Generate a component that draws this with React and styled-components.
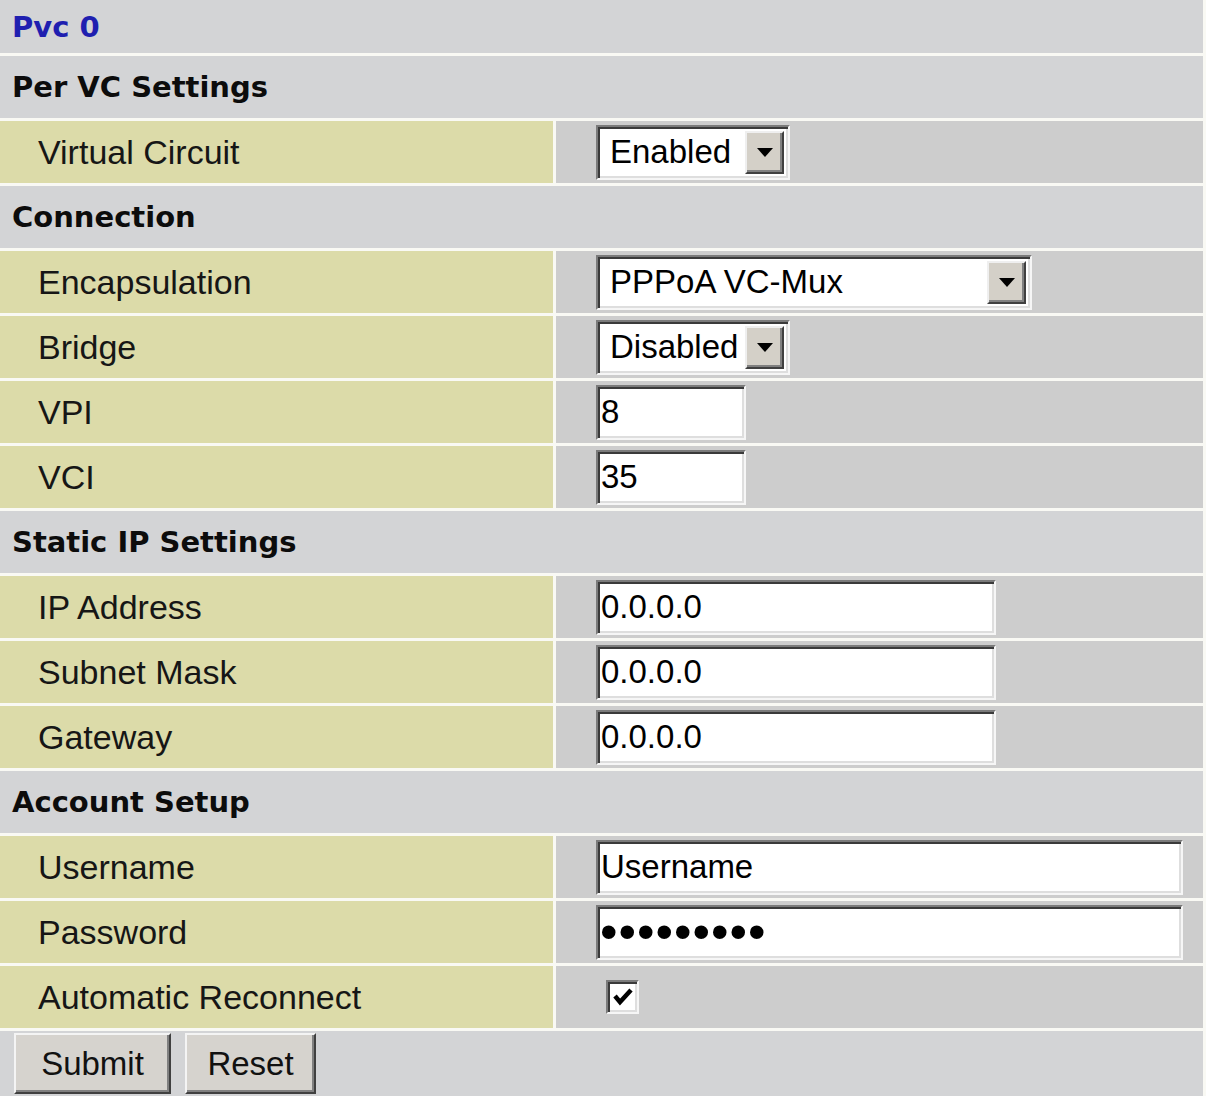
import React from "react";
import styled, { createGlobalStyle } from "styled-components";

const colours = {
  line: "#f9f9f4",
  header: "#d3d4d6",
  label: "#dcdba9",
  value: "#cdcdcd",
  face: "#d4d0c8",
  blue: "#1f1fb0",
};

const GlobalStyle = createGlobalStyle`
  body {
    margin: 0;
    background: ${colours.line};
  }
`;

const Form = styled.div`
  width: 1203px;
  display: grid;
  grid-template-columns: 553px 1fr;
  gap: 3px;
  background: ${colours.line};
  font-family: "Liberation Sans", Arial, sans-serif;
  color: #161616;
`;

const Title = styled.div`
  grid-column: 1 / -1;
  height: 53px;
  display: flex;
  align-items: center;
  padding-left: 12px;
  background: ${colours.header};
  font-family: "DejaVu Sans", Verdana, sans-serif;
  font-weight: bold;
  font-size: 29px;
  color: ${colours.blue};
`;

const Section = styled.div`
  grid-column: 1 / -1;
  height: 62px;
  display: flex;
  align-items: center;
  padding-left: 12px;
  background: ${colours.header};
  font-family: "DejaVu Sans", Verdana, sans-serif;
  font-weight: bold;
  font-size: 29px;
  color: #0c0c0c;
`;

const Label = styled.div`
  height: 62px;
  display: flex;
  align-items: center;
  padding-left: 38px;
  background: ${colours.label};
  font-size: 34px;
`;

const Value = styled.div`
  height: 62px;
  display: flex;
  align-items: center;
  padding-left: ${(p) => (p.$check ? 50 : 40)}px;
  background: ${colours.value};
`;

/* sunken win9x style edit box */
const Field = styled.div`
  box-sizing: border-box;
  width: ${(p) => p.$w}px;
  height: 55px;
  display: flex;
  align-items: center;
  padding: 4px 4px 4px ${(p) => (p.$select ? 12 : 3)}px;
  background: #fff;
  border: 2px solid;
  border-color: #7b7b7b #f6f6f6 #f6f6f6 #7b7b7b;
  box-shadow: inset 2px 2px 0 #3a3a3a, inset -2px -2px 0 #dedede;
  font-size: 33px;
  color: #000;
  white-space: nowrap;
`;

const Dots = styled.span`
  font-size: 50px;
  letter-spacing: 1px;
  line-height: 1;
  margin-left: -1px;
`;

const ArrowButton = styled.div`
  box-sizing: border-box;
  margin-left: auto;
  width: 39px;
  height: 100%;
  display: flex;
  align-items: center;
  justify-content: center;
  background: ${colours.face};
  border: 2px solid;
  border-color: #efefef #404040 #404040 #efefef;
  box-shadow: inset -2px -2px 0 #808080;
`;

const CheckBox = styled.div`
  box-sizing: border-box;
  width: 33px;
  height: 34px;
  display: flex;
  align-items: center;
  justify-content: center;
  background: #fff;
  border: 2px solid;
  border-color: #7b7b7b #f6f6f6 #f6f6f6 #7b7b7b;
  box-shadow: inset 2px 2px 0 #3a3a3a, inset -2px -2px 0 #dedede;
`;

const ButtonRow = styled.div`
  grid-column: 1 / -1;
  height: 65px;
  display: flex;
  gap: 14px;
  padding: 2px 0 0 14px;
  background: ${colours.header};
`;

const Button = styled.div`
  box-sizing: border-box;
  width: ${(p) => p.$w}px;
  height: 61px;
  display: flex;
  align-items: center;
  justify-content: center;
  background: #d6d3ce;
  border: 2px solid;
  border-color: #f4f4f4 #404040 #404040 #f4f4f4;
  box-shadow: inset -2px -2px 0 #808080;
  font-size: 33px;
  color: #111;
`;

const Arrow = () => (
  <svg width="16" height="9" viewBox="0 0 16 9">
    <path d="M0 0h16L8 9z" fill="#000" />
  </svg>
);

const Select = ({ w, children }) => (
  <Field $w={w} $select>
    {children}
    <ArrowButton>
      <Arrow />
    </ArrowButton>
  </Field>
);

const Row = ({ label, children, check }) => (
  <>
    <Label>{label}</Label>
    <Value $check={check}>{children}</Value>
  </>
);

const App = () => (
  <>
    <GlobalStyle />
    <Form>
      <Title>Pvc 0</Title>
      <Section>Per VC Settings</Section>
      <Row label="Virtual Circuit">
        <Select w={194}>Enabled</Select>
      </Row>
      <Section>Connection</Section>
      <Row label="Encapsulation">
        <Select w={436}>PPPoA VC-Mux</Select>
      </Row>
      <Row label="Bridge">
        <Select w={194}>Disabled</Select>
      </Row>
      <Row label="VPI">
        <Field $w={150}>8</Field>
      </Row>
      <Row label="VCI">
        <Field $w={150}>35</Field>
      </Row>
      <Section>Static IP Settings</Section>
      <Row label="IP Address">
        <Field $w={400}>0.0.0.0</Field>
      </Row>
      <Row label="Subnet Mask">
        <Field $w={400}>0.0.0.0</Field>
      </Row>
      <Row label="Gateway">
        <Field $w={400}>0.0.0.0</Field>
      </Row>
      <Section>Account Setup</Section>
      <Row label="Username">
        <Field $w={587}>Username</Field>
      </Row>
      <Row label="Password">
        <Field $w={587}>
          <Dots>•••••••••</Dots>
        </Field>
      </Row>
      <Row label="Automatic Reconnect" check>
        <CheckBox>
          <svg width="20" height="18" viewBox="0 0 20 18">
            <path d="M2 8l5 6L18 2" stroke="#000" strokeWidth="4.5" fill="none" />
          </svg>
        </CheckBox>
      </Row>
      <ButtonRow>
        <Button $w={157}>Submit</Button>
        <Button $w={131}>Reset</Button>
      </ButtonRow>
    </Form>
  </>
);

export default App;
